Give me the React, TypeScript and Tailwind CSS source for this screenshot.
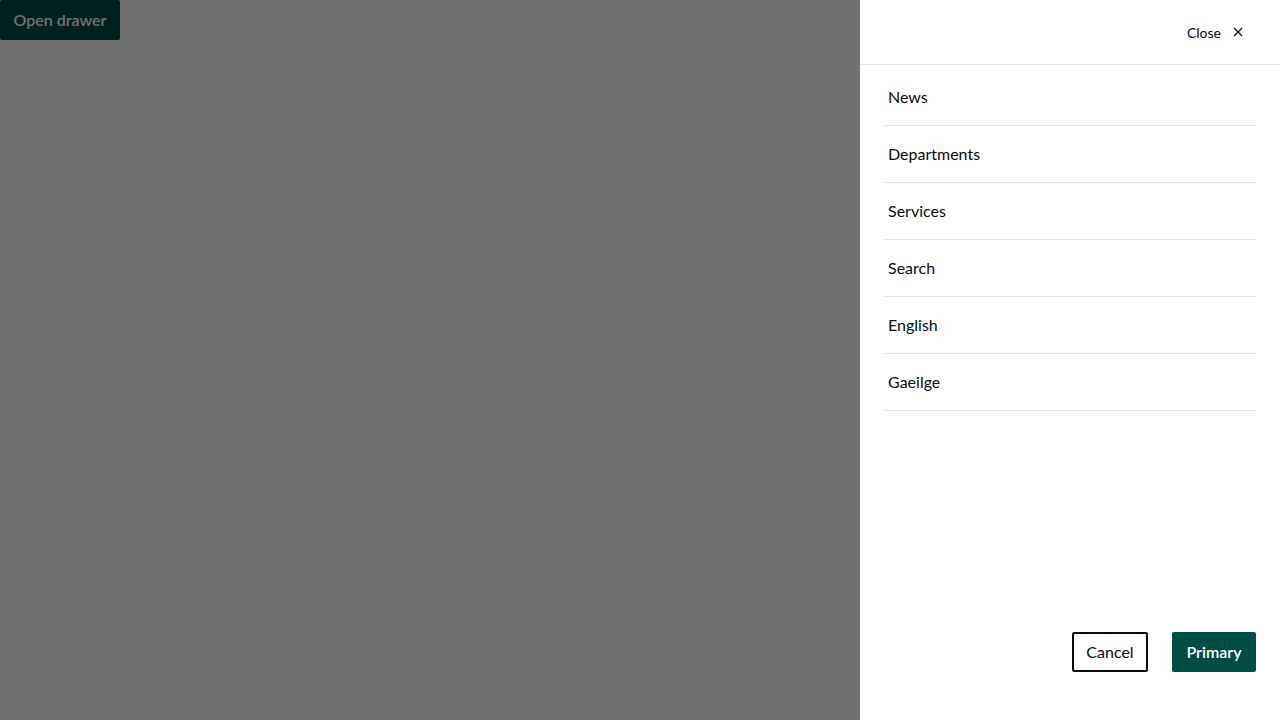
import React from "react";

const items = ["News", "Departments", "Services", "Search", "English", "Gaeilge"];

export default function App() {
  return (
    <div className="relative w-[1280px] h-[720px] overflow-hidden bg-white" style={{ fontFamily: "Lato, 'Noto Sans', sans-serif" }}>
      <button className="h-10 w-[120px] rounded-[2px] bg-[#004d44] text-white text-[16px] font-semibold">
        Open drawer
      </button>
      <div className="absolute inset-0 bg-black/[0.56]" />
      <div className="absolute top-0 right-0 h-full w-[420px] bg-white flex flex-col">
        <div className="h-[65px] border-b border-[#e5e7eb] flex items-center justify-end pr-[37px] shrink-0">
          <button className="flex items-center gap-3 text-[14px] text-[#0b0c0c] mt-[1px]">
            <span>Close</span>
            <svg width="10" height="10" viewBox="0 0 10 10" className="-mt-[2px]">
              <path d="M1 1L9 9M9 1L1 9" stroke="#0b0c0c" strokeWidth="1.3" />
            </svg>
          </button>
        </div>
        <div className="flex-1 flex flex-col px-6 pt-1">
          {items.map((t) => (
            <div key={t} className="h-[57px] border-b border-[#e5e7eb] flex items-center pl-1 text-[16px] text-[#0b0c0c]">
              {t}
            </div>
          ))}
        </div>
        <div className="flex justify-end gap-6 px-6 pb-12">
          <button className="h-10 w-[76px] border-2 border-[#0b0c0c] rounded-[2px] text-[16px] text-[#0b0c0c]">Cancel</button>
          <button className="h-10 w-[84px] bg-[#004d44] rounded-[2px] text-[16px] font-semibold text-white">Primary</button>
        </div>
      </div>
    </div>
  );
}
